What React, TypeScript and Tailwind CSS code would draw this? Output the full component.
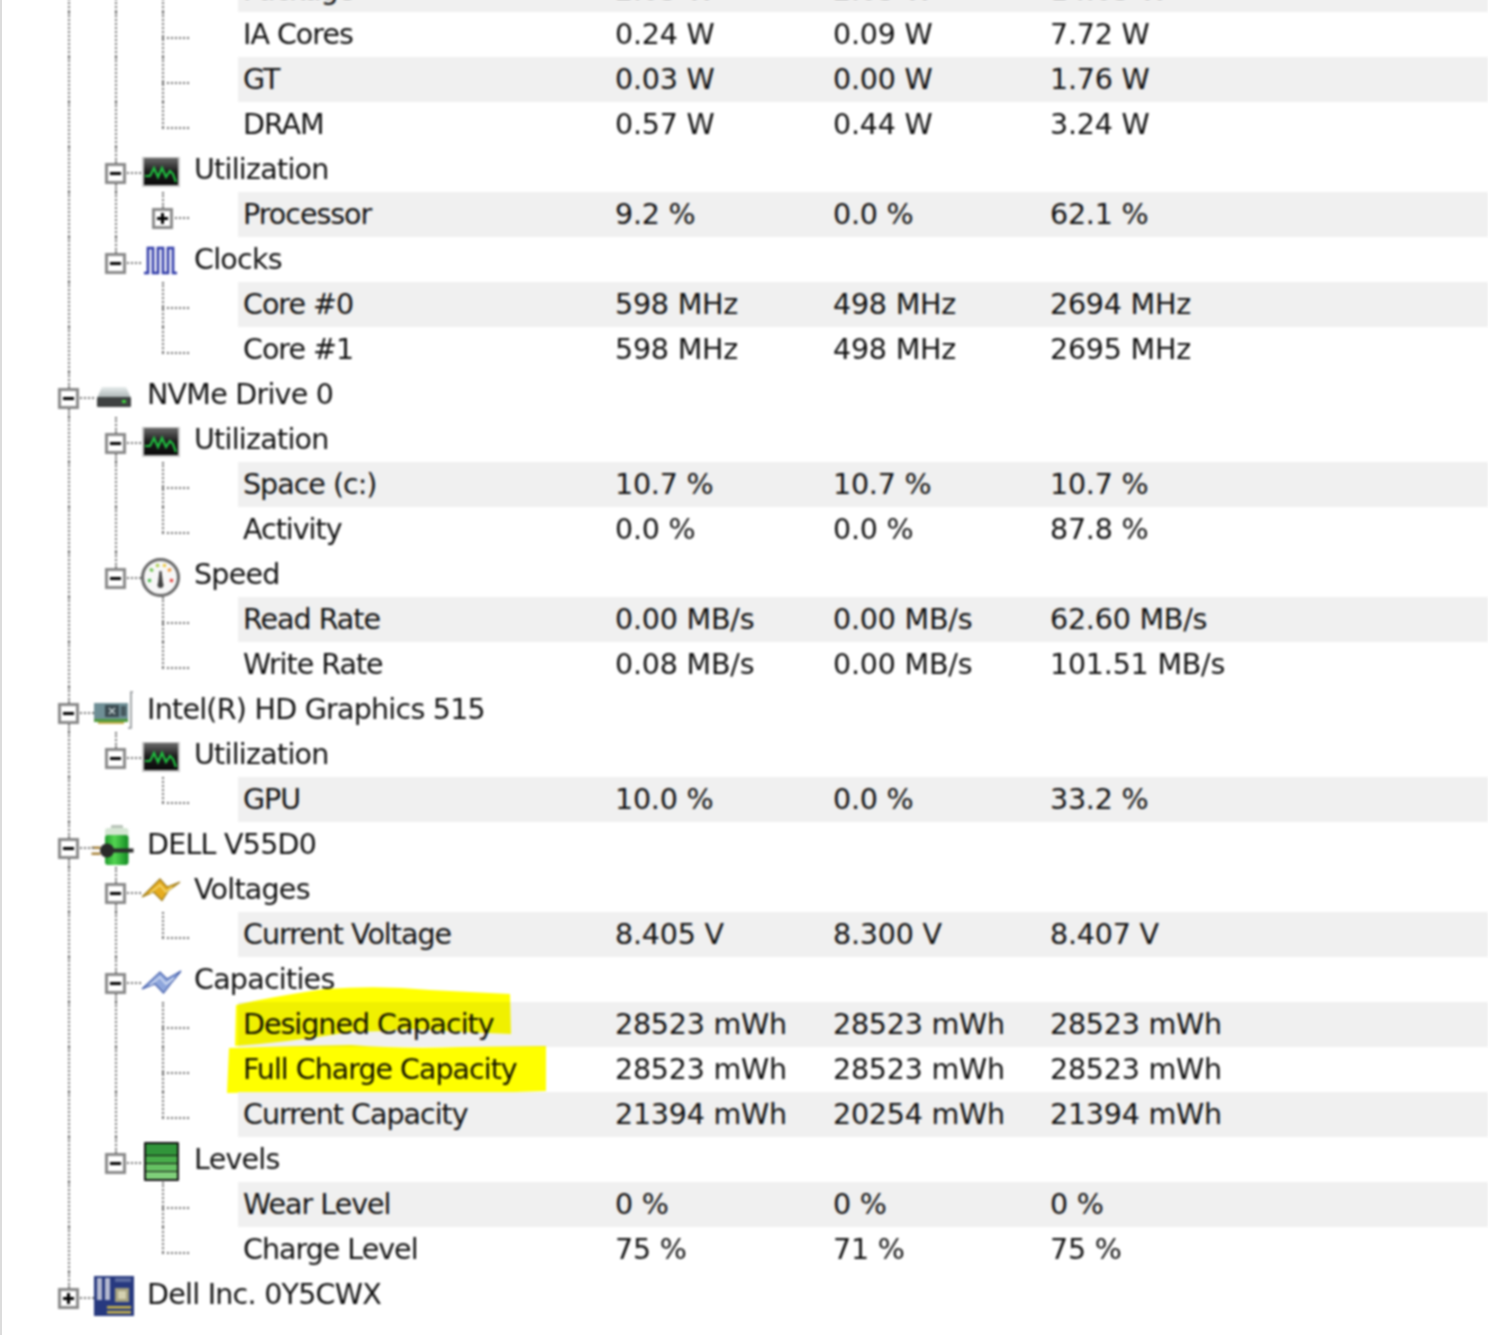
import React from "react";

const FONT = "font-['DejaVu_Sans','Noto_Sans',sans-serif]";

type Cell = "none" | "through" | "tee" | "ell" | "boxMid" | "boxEnd" | "plusEnd" | "plusLeaf";

interface RowData {
  cells: Cell[];
  label: string;
  icon?: React.ReactNode;
  values?: [string, string, string];
  gray?: boolean;
  mark?: "designed" | "full";
}

const dotV = "absolute left-[23px] border-l-2 border-dotted border-[#707070]";
const dotH = "absolute left-[23px] top-[25px] border-t-2 border-dotted border-[#707070]";

function ExpandBox({ plus }: { plus?: boolean }) {
  return (
    <div className="absolute left-[13px] top-[16px] w-[21px] h-[21px] bg-white border-[3px] border-[#8a8a8a] flex items-center justify-center">
      <div className="relative w-[11px] h-[3px] bg-[#000000]">
        {plus && <div className="absolute left-[4px] top-[-4px] w-[3px] h-[11px] bg-[#000000]" />}
      </div>
    </div>
  );
}

function TreeCell({ kind }: { kind: Cell }) {
  const isBox = kind === "boxMid" || kind === "boxEnd" || kind === "plusEnd";
  return (
    <div className="relative w-[47px] h-full shrink-0">
      {kind === "through" && <div className={`${dotV} top-0 bottom-0`} />}
      {kind === "tee" && (
        <>
          <div className={`${dotV} top-0 bottom-0`} />
          <div className={`${dotH} w-[27px]`} />
        </>
      )}
      {kind === "ell" && (
        <>
          <div className={`${dotV} top-0 h-[26px]`} />
          <div className={`${dotH} w-[27px]`} />
        </>
      )}
      {isBox && (
        <>
          <div className={`${dotV} top-0 h-[16px]`} />
          {kind === "boxMid" && <div className={`${dotV} top-[37px] bottom-0`} />}
          <div className={`${dotH} w-[26px]`} />
          <ExpandBox plus={kind === "plusEnd"} />
        </>
      )}
      {kind === "plusLeaf" && (
        <>
          <div className={`${dotV} top-0 h-[16px]`} />
          <div className={`${dotH} w-[27px]`} />
          <ExpandBox plus />
        </>
      )}
    </div>
  );
}

function Svg({ children }: { children: React.ReactNode }) {
  return (
    <svg width="40" height="40" viewBox="0 0 40 40" className="overflow-visible">
      {children}
    </svg>
  );
}

const UtilIcon = () => (
  <Svg>
    <defs>
      <linearGradient id="utilBg" x1="0" y1="0" x2="0" y2="1">
        <stop offset="0" stopColor="#6a6a6a" />
        <stop offset="0.5" stopColor="#1c1c1c" />
        <stop offset="1" stopColor="#0a0a0a" />
      </linearGradient>
    </defs>
    <rect x="0" y="5" width="38" height="30" fill="#c8c8c8" />
    <rect x="2" y="6" width="34" height="27" fill="url(#utilBg)" />
    <polyline
      points="3,24 8,24 12,16 16,25 20,16 24,25 28,19 31,22 34,30"
      fill="none"
      stroke="#1fbf3f"
      strokeWidth="2.2"
    />
  </Svg>
);

const ClocksIcon = () => (
  <Svg>
    <path
      d="M2 31 H6 V6 H11 V31 H16 V6 H21 V31 H26 V6 H31 V31 H35"
      fill="none"
      stroke="#2f3aa8"
      strokeWidth="2.6"
    />
  </Svg>
);

const DriveIcon = () => (
  <Svg>
    <defs>
      <linearGradient id="driveTop" x1="0" y1="0" x2="0" y2="1">
        <stop offset="0" stopColor="#e6ecec" />
        <stop offset="1" stopColor="#a9b2b2" />
      </linearGradient>
    </defs>
    <path d="M6 12 Q6 10 8 10 H30 Q32 10 32 12 L36 21 H2 Z" fill="url(#driveTop)" />
    <rect x="2" y="20" width="34" height="10" rx="1" fill="#3f4242" />
    <rect x="27" y="23" width="4" height="3" fill="#3ed23e" />
  </Svg>
);

const GaugeIcon = () => (
  <Svg>
    <circle cx="18.5" cy="20.5" r="18" fill="#f7f7f7" stroke="#666666" strokeWidth="3" />
    <path d="M6 24 L9 23" stroke="#49b849" strokeWidth="3" />
    <path d="M8 12 L11 14" stroke="#6cc04a" strokeWidth="3" />
    <path d="M15 7 L16 10" stroke="#a8cf45" strokeWidth="3" />
    <path d="M23 7 L22 10" stroke="#f0c93c" strokeWidth="3" />
    <path d="M29 12 L26 14" stroke="#f09a3c" strokeWidth="3" />
    <path d="M31 24 L28 23" stroke="#e2403c" strokeWidth="3" />
    <path d="M17.5 14 H19.5 L21 27 H16 Z" fill="#404040" />
    <circle cx="18.5" cy="28" r="3" fill="#404040" />
  </Svg>
);

const GpuIcon = () => (
  <Svg>
    <rect x="-1" y="11" width="34" height="16" fill="#6f8f96" />
    <rect x="-1" y="27" width="34" height="3" fill="#4e9a3e" />
    <rect x="3" y="30" width="26" height="2" fill="#c8b04a" />
    <rect x="10" y="13" width="14" height="12" fill="#3c4c52" />
    <path d="M14 16 L20 22 M20 16 L14 22" stroke="#c4d0d2" strokeWidth="1.6" />
    <rect x="26" y="14" width="5" height="10" fill="#46585e" />
    <path d="M38 0 H36 V36 H33" fill="none" stroke="#8a8f92" strokeWidth="1.6" />
  </Svg>
);

const BatteryIcon = () => (
  <Svg>
    <defs>
      <linearGradient id="batBody" x1="0" y1="0" x2="1" y2="0">
        <stop offset="0" stopColor="#1f9a2b" />
        <stop offset="0.4" stopColor="#54d552" />
        <stop offset="1" stopColor="#128a22" />
      </linearGradient>
    </defs>
    <rect x="16" y="-2" width="12" height="4" rx="1" fill="#b9c4b9" />
    <rect x="10" y="1" width="23.5" height="14" rx="3" fill="#d5e6d3" />
    <rect x="10" y="8" width="23.5" height="30" rx="3" fill="url(#batBody)" />
    <rect x="-3.5" y="19.5" width="9" height="2.5" fill="#a8843a" />
    <rect x="-3.5" y="25.5" width="9" height="2.5" fill="#a8843a" />
    <circle cx="12" cy="23.5" r="7" fill="#2a2a2a" />
    <rect x="16" y="21.5" width="22.5" height="4" fill="#2a2a2a" />
  </Svg>
);

const VoltIcon = () => (
  <Svg>
    <path
      d="M0 25 L18 7 L25 15 L38 10 L26.5 18.5 L20 28.5 L11.5 20 Z"
      fill="#e6ac1e"
      stroke="#9c7a18"
      strokeWidth="1.2"
    />
    <path d="M8 21 L18 13 L24 20 L30 15" fill="none" stroke="#f6de7a" strokeWidth="1.6" />
  </Svg>
);

const CapIcon = () => (
  <Svg>
    <path
      d="M0 27 L18 10 L25 17 L39 9 L30 20 L21.5 31 L13 22 Z"
      fill="#8ea6dc"
      stroke="#3f5aa8"
      strokeWidth="1.2"
    />
    <path d="M8 23 L18 15 L24 22 L32 16" fill="none" stroke="#d6e0f4" strokeWidth="1.6" />
  </Svg>
);

const LevelsIcon = () => (
  <Svg>
    <rect x="2" y="0" width="35" height="39" rx="1" fill="#111111" />
    <rect x="4" y="2" width="31" height="11" fill="#31953a" />
    <rect x="4" y="14" width="31" height="7" fill="#48ad4a" />
    <rect x="4" y="22" width="31" height="7" fill="#66c263" />
    <rect x="4" y="30" width="31" height="7" fill="#7fd07a" />
  </Svg>
);

const BoardIcon = () => (
  <Svg>
    <rect x="-1" y="-1" width="40" height="40" fill="#27397f" />
    <rect x="2" y="1" width="5" height="22" fill="#b5bad0" />
    <rect x="10" y="1" width="5" height="22" fill="#b5bad0" />
    <rect x="20" y="1" width="16" height="4" fill="#5a6aa0" />
    <rect x="20" y="11" width="14" height="14" fill="#a4a07e" />
    <rect x="23" y="14" width="8" height="8" fill="#d4d0b0" />
    <rect x="12" y="29" width="24" height="2.5" fill="#cdb84a" />
    <rect x="12" y="34" width="24" height="2.5" fill="#cdb84a" />
  </Svg>
);

function Highlight({ which }: { which: "designed" | "full" }) {
  if (which === "designed") {
    return (
      <svg
        width="290"
        height="70"
        viewBox="0 0 290 70"
        className="absolute left-[-8px] top-[-20px] mix-blend-multiply pointer-events-none"
      >
        <path
          d="M5 64 L6 23 Q40 15 95 7 Q150 3 200 8 L280 12 L281 52 Q230 50 180 47 Q150 50 120 50 Q60 60 5 64 Z"
          fill="#ffff00"
        />
      </svg>
    );
  }
  return (
    <svg
      width="330"
      height="60"
      viewBox="0 0 330 60"
      className="absolute left-[-17px] top-[-4px] mix-blend-multiply pointer-events-none"
    >
      <path
        d="M8 5 Q70 3 130 2 Q180 6 240 4 L325 3 L325 48 Q240 51 160 50 Q80 48 6 50 Z"
        fill="#ffff00"
      />
    </svg>
  );
}

const rows: RowData[] = [
  { cells: ["through", "through", "tee"], label: "Package", values: ["2.05 W", "2.05 W", "14.05 W"], gray: true },
  { cells: ["through", "through", "tee"], label: "IA Cores", values: ["0.24 W", "0.09 W", "7.72 W"] },
  { cells: ["through", "through", "tee"], label: "GT", values: ["0.03 W", "0.00 W", "1.76 W"], gray: true },
  { cells: ["through", "through", "ell"], label: "DRAM", values: ["0.57 W", "0.44 W", "3.24 W"] },
  { cells: ["through", "boxMid"], label: "Utilization", icon: <UtilIcon /> },
  { cells: ["through", "through", "plusLeaf"], label: "Processor", values: ["9.2 %", "0.0 %", "62.1 %"], gray: true },
  { cells: ["through", "boxEnd"], label: "Clocks", icon: <ClocksIcon /> },
  { cells: ["through", "none", "tee"], label: "Core #0", values: ["598 MHz", "498 MHz", "2694 MHz"], gray: true },
  { cells: ["through", "none", "ell"], label: "Core #1", values: ["598 MHz", "498 MHz", "2695 MHz"] },
  { cells: ["boxMid"], label: "NVMe Drive 0", icon: <DriveIcon /> },
  { cells: ["through", "boxMid"], label: "Utilization", icon: <UtilIcon /> },
  { cells: ["through", "through", "tee"], label: "Space (c:)", values: ["10.7 %", "10.7 %", "10.7 %"], gray: true },
  { cells: ["through", "through", "ell"], label: "Activity", values: ["0.0 %", "0.0 %", "87.8 %"] },
  { cells: ["through", "boxEnd"], label: "Speed", icon: <GaugeIcon /> },
  { cells: ["through", "none", "tee"], label: "Read Rate", values: ["0.00 MB/s", "0.00 MB/s", "62.60 MB/s"], gray: true },
  { cells: ["through", "none", "ell"], label: "Write Rate", values: ["0.08 MB/s", "0.00 MB/s", "101.51 MB/s"] },
  { cells: ["boxMid"], label: "Intel(R) HD Graphics 515", icon: <GpuIcon /> },
  { cells: ["through", "boxEnd"], label: "Utilization", icon: <UtilIcon /> },
  { cells: ["through", "none", "ell"], label: "GPU", values: ["10.0 %", "0.0 %", "33.2 %"], gray: true },
  { cells: ["boxMid"], label: "DELL V55D0", icon: <BatteryIcon /> },
  { cells: ["through", "boxMid"], label: "Voltages", icon: <VoltIcon /> },
  { cells: ["through", "through", "ell"], label: "Current Voltage", values: ["8.405 V", "8.300 V", "8.407 V"], gray: true },
  { cells: ["through", "boxMid"], label: "Capacities", icon: <CapIcon /> },
  { cells: ["through", "through", "tee"], label: "Designed Capacity", values: ["28523 mWh", "28523 mWh", "28523 mWh"], gray: true, mark: "designed" },
  { cells: ["through", "through", "tee"], label: "Full Charge Capacity", values: ["28523 mWh", "28523 mWh", "28523 mWh"], mark: "full" },
  { cells: ["through", "through", "ell"], label: "Current Capacity", values: ["21394 mWh", "20254 mWh", "21394 mWh"], gray: true },
  { cells: ["through", "boxEnd"], label: "Levels", icon: <LevelsIcon /> },
  { cells: ["through", "none", "tee"], label: "Wear Level", values: ["0 %", "0 %", "0 %"], gray: true },
  { cells: ["through", "none", "ell"], label: "Charge Level", values: ["75 %", "71 %", "75 %"] },
  { cells: ["plusEnd"], label: "Dell Inc. 0Y5CWX", icon: <BoardIcon /> },
];

function TreeRow({ row }: { row: RowData }) {
  return (
    <div className="flex h-[45px] pl-[45px]">
      {row.cells.map((c, i) => (
        <TreeCell key={i} kind={c} />
      ))}
      {row.values ? (
        <div className={`relative ml-[52px] flex-1 flex items-center pl-[5px] pt-[2px] ${row.gray ? "bg-[#f0f0f0]" : ""}`}>
          <div className="w-[372px] tracking-[-1px]">{row.label}</div>
          <div className="w-[218px] tracking-[-0.2px]">{row.values[0]}</div>
          <div className="w-[217px] tracking-[-0.2px]">{row.values[1]}</div>
          <div className="tracking-[-0.2px]">{row.values[2]}</div>
          {row.mark && <Highlight which={row.mark} />}
        </div>
      ) : (
        <div className="flex items-center">
          <div className="w-[47px] h-[40px] mt-1 pl-[3px] shrink-0">{row.icon}</div>
          <div className="ml-[8px] pt-[2px] tracking-[-0.75px]">{row.label}</div>
        </div>
      )}
    </div>
  );
}

export default function App() {
  return (
    <div className={`${FONT} w-[1488px] h-[1335px] overflow-hidden bg-white border-l-2 border-[#dcdcdc] text-[28.5px] leading-none text-[#111111]`}>
      <div className="mt-[-33px] ml-[-2px] blur-[0.8px]">
        {rows.map((r, i) => (
          <TreeRow key={i} row={r} />
        ))}
      </div>
    </div>
  );
}
